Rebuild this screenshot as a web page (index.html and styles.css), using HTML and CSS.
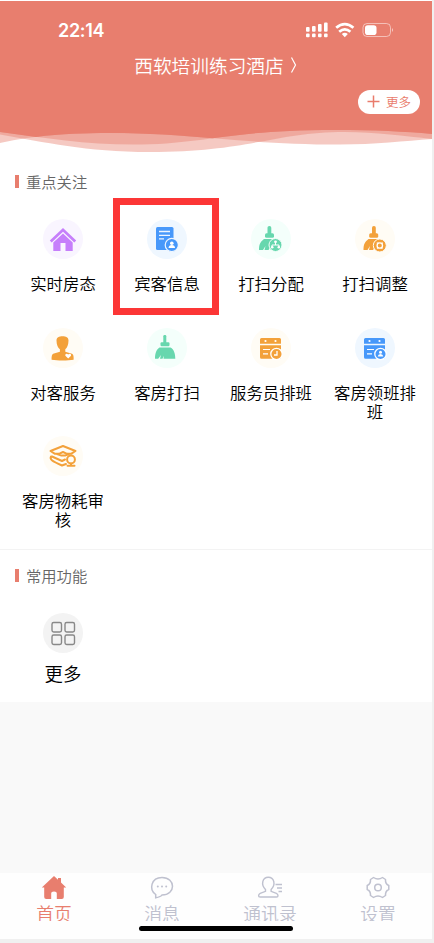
FILE: index.html
```html
<!DOCTYPE html>
<html lang="zh-CN">
<head>
<meta charset="utf-8">
<title>西软培训练习酒店</title>
<link rel="stylesheet" href="styles.css">
</head>
<body>
<div class="phone">
  <header class="header">
    <div class="status">
      <span class="time">22:14</span>
      <svg class="status-icons" width="90" height="18" viewBox="0 0 90 18" fill="#fff">
        <g><rect x="1" y="6" width="3.6" height="4.8" rx="1"/><rect x="7" y="5" width="3.6" height="5.8" rx="1"/><rect x="13" y="3" width="3.6" height="7.8" rx="1"/><rect x="19" y="1.5" width="3.6" height="9.3" rx="1"/>
        <rect x="1" y="12.6" width="3.6" height="3.6" rx="1"/><rect x="7" y="12.6" width="3.6" height="3.6" rx="1"/><rect x="13" y="12.6" width="3.6" height="3.6" rx="1"/><rect x="19" y="12.6" width="3.6" height="3.6" rx="1"/></g>
        <g fill="none" stroke="#fff" stroke-width="2.8"><path d="M31.200 6.800q8.600-7.400 17.200 0M34.200 10.700q5.600-4.700 11.200 0"/></g>
        <path d="M36.800 12.900q3-2.400 6 0l-3 3.300z"/>
        <rect x="58" y="2.500" width="27.500" height="13" rx="4" fill="none" stroke="#fff" stroke-opacity=".5"/>
        <rect x="60" y="4.300" width="11.500" height="9.800" rx="2.800"/>
        <path d="M87 7q2 2 0 4z" opacity=".6"/>
      </svg>
    </div>
    <div class="hotel">西软培训练习酒店<svg width="8" height="20" viewBox="0 0 8 20" fill="none" stroke="#fff" stroke-width="1.200"><path d="M1.500 2.500l4 7.500-4 7.500"/></svg></div>
    <button class="more"><svg width="13" height="13" viewBox="0 0 13 13" stroke="#e97c6c" stroke-width="1.500"><path d="M6.500 .5v12M.5 6.500h12"/></svg>更多</button>
  </header>
  <svg class="waves" width="432" height="26" viewBox="0 0 432 26">
    <defs>
      <clipPath id="a"><path d="M0 0V4C45 10 85 16.500 133 16.500C205 16.500 225 2 335 2C375 2 405 3.500 432 6V0z"/></clipPath>
      <clipPath id="b" clip-path="url(#a)"><path d="M0 0V15C35 7 75 5 110 5C190 5 245 16.500 340 16.500C375 16.500 405 13 432 11V0z"/></clipPath>
    </defs>
    <g fill="#e87e6e" fill-opacity=".42">
      <path d="M0 0V4C45 10 85 16.500 133 16.500C205 16.500 225 2 335 2C375 2 405 3.500 432 6V0z"/>
      <path d="M0 0V15C35 7 75 5 110 5C190 5 245 16.500 340 16.500C375 16.500 405 13 432 11V0z"/>
      <path d="M0 0V6.500C45 14 85 24 150 24C250 24 275 4 345 4C375 4 405 8 432 11V0z"/>
    </g>
    <path clip-path="url(#b)" fill="#e87e6e" d="M0 0V6.500C45 14 85 24 150 24C250 24 275 4 345 4C375 4 405 8 432 11V0z"/>
  </svg>

  <section class="focus">
    <h2>重点关注</h2>
    <div class="grid">
      <div class="item"><span class="disc violet"><svg viewBox="0 0 40 40" fill="currentColor"><path d="M20 9L6.800 21.500l1.900 2L20 12.800l11.300 10.700 1.900-2z"/><path d="M20 14.400L10.300 23.600V32h7.200v-8h5v8h7.200v-8.400z"/></svg></span><span class="label">实时房态</span></div>
      <div class="item selected"><span class="disc blue"><svg viewBox="0 0 40 40"><rect x="9" y="8" width="17.500" height="23" rx="1.500" fill="currentColor"/><g stroke="#eef6ff" stroke-width="1.300"><path d="M12 12.500h11M12 16.300h11M12 19.800h5"/></g><circle cx="24.800" cy="26" r="6.600" fill="currentColor" stroke="#eef6ff" stroke-width="1.200"/><circle cx="24.800" cy="24.300" r="1.800" fill="#fff"/><path d="M21.500 29q.3-3 3.300-3t3.300 3z" fill="#fff"/></svg></span><span class="label">宾客信息</span></div>
      <div class="item"><span class="disc green"><svg viewBox="0 0 40 40"><g fill="currentColor"><rect x="16.500" y="7" width="3.800" height="9" rx="1.800"/><rect x="14" y="14.200" width="9" height="4.600" rx="1.500"/><path d="M13 20h12v11h-5.500l.5-4-2.500 4h-4l1-4-2.500 4H8c0-5 1-8 5-11z"/></g><circle cx="24.500" cy="26" r="6.500" fill="currentColor" stroke="#f3fffa" stroke-width="1"/><path d="M24.500 23v3M21 28v-2h7v2" fill="none" stroke="#fff"/><g fill="#fff"><circle cx="24.500" cy="22.800" r="1.400"/><circle cx="21.200" cy="28.200" r="1.300"/><circle cx="27.800" cy="28.200" r="1.300"/></g></svg></span><span class="label">打扫分配</span></div>
      <div class="item"><span class="disc orange"><svg viewBox="0 0 40 40"><g fill="currentColor"><rect x="17" y="7" width="3.800" height="9" rx="1.800"/><rect x="14.200" y="14.200" width="9" height="4.600" rx="1.500"/><path d="M13.500 20h12v11h-5.500l.5-4-2.500 4h-4l1-4-2.500 4H8.500c0-5 1-8 5-11z"/></g><circle cx="24.800" cy="26.500" r="6.500" fill="currentColor" stroke="#fffcf5" stroke-width="1"/><circle cx="24.800" cy="26.500" r="2.700" fill="none" stroke="#fff" stroke-width="1.300"/><path d="M21.700 24h2M26 29h2M27.200 23.300v1.800M22.400 28v1.800" stroke="#fff"/></svg></span><span class="label">打扫调整</span></div>
      <div class="item"><span class="disc orange"><svg viewBox="0 0 40 40"><path fill="currentColor" d="M13.500 12.500C13.500 9.500 16 8.300 19.500 8.300s6 1.200 6 4.200c0 4.500-1.500 7.500-3.200 8.700v2.600l6.700 2c1.500.6 1.800 3 1.600 6-6 1-16 1-22 0-.2-3 .3-5.400 1.600-6l6.700-2v-2.600c-1.900-1.200-3.400-4.200-3.400-8.700z"/><path fill="#fff" d="M25.200 30.500l-2.600-2.500c-1.200-1.500 1-3.200 2.600-1.400 1.600-1.800 3.800-.1 2.600 1.400z"/></svg></span><span class="label">对客服务</span></div>
      <div class="item"><span class="disc green"><svg viewBox="0 0 40 40" fill="currentColor"><rect x="16.300" y="7" width="3" height="9" rx="1.200"/><rect x="13.500" y="14.200" width="9" height="4" rx="1.200"/><path d="M12.500 19.500h11c3.500 2 4.800 6 4.800 11.300H16.500l.5-3-1.500 3H13l1-3.800-2.800 3.800H8c0-5 1-9 4.500-11.300z"/></svg></span><span class="label">客房打扫</span></div>
      <div class="item"><span class="disc orange"><svg viewBox="0 0 40 40"><path fill="currentColor" d="M9 11.500q0-1.500 1.500-1.500h18q1.500 0 1.500 1.500v4.300H9zM9 17.300h21v13.400H10.500Q9 30.700 9 29.200z"/><g fill="#fff"><circle cx="14.500" cy="13" r="1.100"/><circle cx="24.500" cy="13" r="1.100"/></g><path d="M12 21.500h7M12 25.800h5" stroke="#fff" stroke-width="1.200"/><circle cx="25.500" cy="26" r="5.700" fill="currentColor" stroke="#fff" stroke-width="1.300"/><path d="M26 23v4h-3" fill="none" stroke="#fff" stroke-width="1.300"/></svg></span><span class="label">服务员排班</span></div>
      <div class="item"><span class="disc blue"><svg viewBox="0 0 40 40"><path fill="currentColor" d="M9 11.500q0-1.500 1.500-1.500h18q1.500 0 1.500 1.500v4.300H9zM9 17.300h21v13.400H10.500Q9 30.700 9 29.200z"/><g fill="#fff"><circle cx="14.500" cy="13" r="1.100"/><circle cx="24.500" cy="13" r="1.100"/></g><path d="M12 21.500h7M12 25.800h5" stroke="#fff" stroke-width="1.200"/><circle cx="25.500" cy="26" r="5.700" fill="currentColor" stroke="#fff" stroke-width="1.300"/><circle cx="25.500" cy="24.200" r="1.500" fill="#fff"/><path d="M22.700 28.500q.3-2.500 2.800-2.500t2.800 2.500z" fill="#fff"/></svg></span><span class="label">客房领班排班</span></div>
      <div class="item"><span class="disc orange"><svg viewBox="0 0 40 40" fill="none" stroke="currentColor" stroke-width="2" stroke-linejoin="round" stroke-linecap="round"><path d="M7.500 15L20 10l12.500 5-4.500 2.800h-4L20 16l-4 1.800h-4zM14 18l4.500 1.500h3.500l4-1.500"/><path d="M8 20.500c-1.500 3 1 4.500 11 9l4-1.500M9 20.500l10 4.500 3-1.500"/><circle cx="28" cy="23.500" r="3.900"/><path d="M28 27.500v2M24.500 29.800h7"/></svg></span><span class="label">客房物耗审核</span></div>
    </div>
  </section>

  <section class="common">
    <h2>常用功能</h2>
    <div class="grid">
      <div class="item"><span class="disc gray"><svg viewBox="0 0 40 40" fill="none" stroke="currentColor" stroke-width="1.400"><rect x="9" y="9.500" width="9.500" height="9.500" rx="1.700"/><rect x="22" y="9.500" width="9.500" height="9.500" rx="1.700"/><rect x="9" y="22" width="9.500" height="9.500" rx="1.700"/><rect x="22" y="22" width="9.500" height="9.500" rx="1.700"/></svg></span><span class="label large">更多</span></div>
    </div>
  </section>

  <nav class="tabs">
    <a class="tab active"><svg viewBox="0 0 26 26"><path fill="currentColor" d="M13 1L.8 12.500h2.400V22q0 2 2 2h5v-5.500q0-2 2.800-2t2.800 2V24h5q2 0 2-2v-9.500h2.400L20 7.500V3h-3v1.800z"/></svg><span>首页</span></a>
    <a class="tab"><svg viewBox="0 0 26 26" fill="none" stroke="currentColor" stroke-width="1.500"><path d="M6.700 22.800v-3.300C-.3 14.500 2 2.500 13 2.500c14 0 14 17.500 0 17.500q-1 1.800-6.300 2.800z"/><g fill="currentColor" stroke="none"><circle cx="8.800" cy="11.500" r="1"/><circle cx="13" cy="11.500" r="1"/><circle cx="17.200" cy="11.500" r="1"/></g></svg><span>消息</span></a>
    <a class="tab"><svg viewBox="0 0 26 26" fill="none" stroke="currentColor" stroke-width="1.400"><path d="M8.500 14.500C3.500 9.500 5.500 2.300 11.300 2.300s7.800 7.200 2.800 12.200v1.800l5.300 2q1.600.6 1.600 2.500 0 1.200-1.500 1.200H3.200q-1.600 0-1.600-1.200 0-1.900 1.600-2.500l5.300-2zM18.500 9.500H25M20 13h5M21.500 16.500H25"/></svg><span>通讯录</span></a>
    <a class="tab"><svg viewBox="0 0 26 26" fill="none" stroke="currentColor" stroke-width="1.500" stroke-linejoin="round"><path d="M8.500 2.500q4.500 3 9 0l3 2q-.3 4.500 3.300 6v4q-3.600 1.500-3.300 6l-3 2q-4.500-3-9 0l-3-2q.3-4.500-3.300-6v-4q3.600-1.500 3.300-6z"/><circle cx="13" cy="12.500" r="3.300"/></svg><span>设置</span></a>
    <i class="home-bar"></i>
  </nav>
</div>
</body>
</html>
```
FILE: styles.css
```css
* { box-sizing: border-box; }
body {
  margin: 0;
  height: 943px;
  padding-top: 1px;
  overflow: hidden;
  background: #f0f0f0;
  font-family: "Noto Sans CJK SC", sans-serif;
}
.phone {
  width: 432px;
  height: 938px;
  display: flex;
  flex-direction: column;
  background: #f9f9f9;
  box-shadow: 0 -1px #fff;
}
.header {
  height: 127px;
  flex: none;
  display: flex;
  flex-direction: column;
  background: #e87e6e;
  color: #fff;
}
.status {
  height: 50px;
  padding: 20px 37px 0 58px;
  display: flex;
  justify-content: space-between;
}
.time {
  font: 600 18px/20px Inter, sans-serif;
  letter-spacing: -.3px;
}
.status-icons { flex: none; }
.hotel {
  height: 28px;
  display: flex;
  align-items: center;
  justify-content: center;
  gap: 6px;
  font-size: 18.700px;
  font-weight: 350;
  line-height: 28px;
}
.more {
  align-self: flex-end;
  width: 62px;
  height: 24px;
  margin: 11px 12px 0 0;
  padding: 0 0 1px;
  display: flex;
  align-items: center;
  justify-content: center;
  gap: 6px;
  border: 0;
  border-radius: 12px;
  background: #fff;
  color: #e97c6c;
  font: 350 12.500px/20px "Noto Sans CJK SC", sans-serif;
}
.waves {
  display: block;
  flex: none;
  background: #fff;
}
.focus {
  height: 395px;
  flex: none;
  padding-top: 15px;
  background: #fff;
}
.common {
  height: 153px;
  flex: none;
  padding-top: 13px;
  background: #fff;
  border-top: 1px solid #f3f3f3;
}
h2 {
  display: flex;
  align-items: center;
  gap: 7px;
  height: 24px;
  margin: 0;
  padding-left: 15px;
  color: #666;
  font-size: 15.300px;
  font-weight: 350;
  line-height: 24px;
}
h2::before {
  content: "";
  width: 4px;
  height: 13px;
  background: #e87e6e;
}
.grid {
  display: grid;
  grid-template-columns: repeat(4, 104px);
  grid-auto-rows: 108.500px;
  padding: 5px 0 0 11px;
}
.common .grid { padding-top: 5px; }
.item {
  display: flex;
  flex-direction: column;
  align-items: center;
  padding-top: 21px;
}
.selected {
  width: 106px;
  height: 117px;
  margin-left: -2px;
  padding: 14px 0 0 2px;
  border: 7px solid #fc3636;
}
.disc {
  width: 40px;
  height: 40px;
  flex: none;
  border-radius: 50%;
}
.disc svg { display: block; }
.violet { color: #c67ffb; background: #f9f5ff; }
.blue { color: #4798fa; background: #eff7ff; }
.green { color: #67d7ae; background: #f4fffb; }
.orange { color: #f3a13a; background: #fffcf5; }
.gray { color: #888; background: #f3f3f3; }
.label {
  width: 84px;
  margin-top: 15px;
  color: #000;
  font-size: 16.400px;
  font-weight: 350;
  line-height: 19px;
  text-align: center;
}
.label.large {
  margin-top: 8px;
  font-size: 18.400px;
  line-height: 24px;
}
.tabs {
  height: 66px;
  flex: none;
  position: relative;
  margin-top: auto;
  display: grid;
  grid-template-columns: repeat(4, 108px);
  background: #fefefe;
}
.tab {
  display: flex;
  flex-direction: column;
  align-items: center;
  padding-top: 2px;
  color: #bfc1cf;
}
.tab svg { width: 26px; height: 26px; flex: none; }
.tab span {
  height: 20px;
  overflow: hidden;
  font-size: 17.800px;
  font-weight: 350;
  line-height: 25px;
}
.active { color: #e87e6e; }
.home-bar {
  position: absolute;
  left: 139px;
  bottom: 8px;
  width: 154px;
  height: 5px;
  border-radius: 3px;
  background: #000;
}
```
